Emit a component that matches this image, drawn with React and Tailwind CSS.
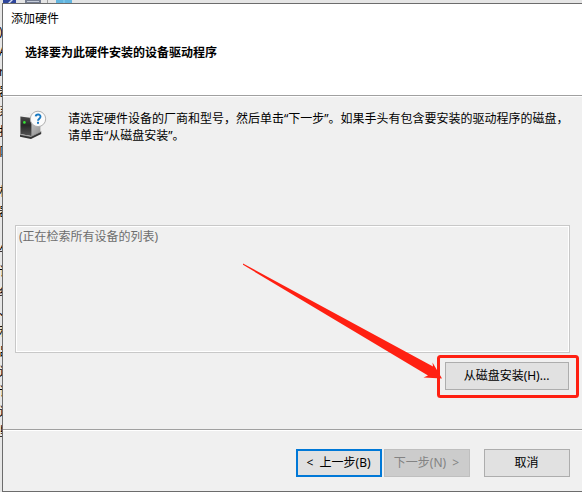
import React from 'react';

const pageRows = [
  '', ')', 'A', 'r', '器', '系', '打', '阝', '', '朴', '器', '',
  '牛', '讠', '纟', '、', '利', '吕', '辶', '讠', '辶', '垦', '', '',
];

const buttonStyles = {
  normal: 'border border-[#adadad] bg-[#e1e1e1] text-black',
  focused: 'border-2 border-[#0078d7] bg-[#e1e1e1] text-black',
  disabled: 'border border-[#bfbfbf] bg-[#cccccc] text-[#838383]',
};

const DialogButton = ({ variant = 'normal', className = '', children }) => (
  <button
    disabled={variant === 'disabled'}
    className={`flex h-7 items-center justify-center whitespace-pre pr-px pb-[2px] ${buttonStyles[variant]} ${className}`}
  >
    {children}
  </button>
);

const HardwareIcon = () => (
  <svg width="32" height="32" viewBox="1.6 0 32 32" className="shrink-0">
    <defs>
      <linearGradient id="front" x1="0" y1="0" x2="0" y2="1">
        <stop offset="0" stopColor="#4b4b4b" />
        <stop offset="0.45" stopColor="#292929" />
        <stop offset="1" stopColor="#555555" />
      </linearGradient>
      <linearGradient id="side" x1="0" y1="0" x2="1" y2="1">
        <stop offset="0" stopColor="#e8e8e8" />
        <stop offset="1" stopColor="#8d8d8d" />
      </linearGradient>
    </defs>
    <path d="M3 6.5 13 3l10 2v18l-9 5z" fill="url(#side)" />
    <path d="M3 6.5 13 3l10 2-9 3z" fill="#ededed" />
    <path d="M3 6.5l11 1.5v18L3 24z" fill="url(#front)" />
    <path d="M2.6 24.5l11 2 10.2-5v2.5L13.6 29 2.6 26.8z" fill="#343434" />
    <path d="M2.6 24.5l11 2 10.2-5" fill="none" stroke="#9a9a9a" strokeWidth="0.8" />
    <circle cx="7" cy="12.4" r="1.3" fill="#35e635" />
    <circle cx="20.6" cy="8.9" r="7.7" fill="#fbfbfb" stroke="#b0b0b0" strokeWidth="1" />
    <path d="M18.3 6.4c.3-2.5 4.9-2.5 4.8.3 0 1.9-2.5 2-2.5 4" fill="none" stroke="#1979c2" strokeWidth="1.9" />
    <rect x="19.6" y="11.8" width="2" height="2" fill="#1979c2" />
  </svg>
);

const ToolbarStrip = () => (
  <svg width="582" height="3" viewBox="0 0 582 3" className="block">
    <rect width="582" height="3" fill="#e5e5e5" />
    <rect x="3" width="13" height="3" fill="#2d459b" />
    <path d="M8 3l3-3h2l-3 3z" fill="#d9e1f5" />
    <rect x="25" width="16" height="3" fill="#737b8e" />
    <path d="M27 1.5h12" stroke="#c4cbd8" />
    <path d="M47.5 0v3" stroke="#a0a0a0" />
    <rect x="56" width="16" height="3" fill="#62b5df" />
    <path d="M64 0v3" stroke="#8dd0f0" />
  </svg>
);

const App = () => (
  <div className="relative flex h-[492px] w-[582px] flex-col overflow-hidden bg-[#e7e7e7] text-[12px] leading-[17px] text-black [font-family:'Noto_Sans','Noto_Sans_CJK_SC',sans-serif]">
    <ToolbarStrip />
    <div className="flex min-h-0 flex-1">
      {/* Page behind the dialog */}
      <div className="flex w-[2px] shrink-0 flex-col overflow-hidden">
        {pageRows.map((char, index) => (
          <span key={index} className="-ml-px block h-5 w-3 shrink-0 leading-[18px]">{char}</span>
        ))}
      </div>

      <div className="flex min-w-0 flex-1 flex-col border-y border-l border-[#6c6c6c] bg-[#f0f0f0]">
        {/* Header */}
        <header className="h-[92px] shrink-0 border-b border-[#a0a0a0] bg-white">
          <div className="pt-[6px] pl-2">添加硬件</div>
          <h1 className="pt-[17px] pl-[22px] font-bold">选择要为此硬件安装的设备驱动程序</h1>
        </header>

        {/* Wizard page */}
        <main className="h-[334px] shrink-0 border-y border-t-white border-b-[#a0a0a0] pl-3">
          <div className="flex pt-[13px] pl-1">
            <HardwareIcon />
            <p className="ml-[17px] whitespace-nowrap">
              请选定硬件设备的厂商和型号，然后单击“下一步”。如果手头有包含要安装的驱动程序的磁盘，
              <br />
              请单击“从磁盘安装”。
            </p>
          </div>
          <div className="mt-[81px] h-32 w-[555px] border border-[#c8c8c8]">
            <div className="h-full border border-white pt-px pl-[2px] text-[#6d6d6d]">(正在检索所有设备的列表)</div>
          </div>
          <div className="mt-[9px] ml-[430px]">
            <DialogButton className="w-[124px]">从磁盘安装(H)...</DialogButton>
          </div>
        </main>

        {/* Footer */}
        <footer className="flex flex-1 border-t border-white pt-[18px] pl-[293px]">
          <DialogButton variant="focused" className="w-[86px]">{'<  上一步(B)'}</DialogButton>
          <DialogButton variant="disabled" className="ml-[2px] w-[86px]">{'下一步(N)  >'}</DialogButton>
          <DialogButton className="ml-[14px] w-[86px]">取消</DialogButton>
        </footer>
      </div>
    </div>

    {/* Callout */}
    <svg width="582" height="492" viewBox="0 0 582 492" className="pointer-events-none absolute inset-0">
      <rect x="438.5" y="356.5" width="139" height="40" rx="2" fill="none" stroke="#ff2012" strokeWidth="3" />
      <path d="M243 263.5 L433 366.5 L432.5 362.5 L442 378.5 L423.5 377.5 L428 375.5 L243 264.8z" fill="#ff2012" />
    </svg>
  </div>
);

export default App;
